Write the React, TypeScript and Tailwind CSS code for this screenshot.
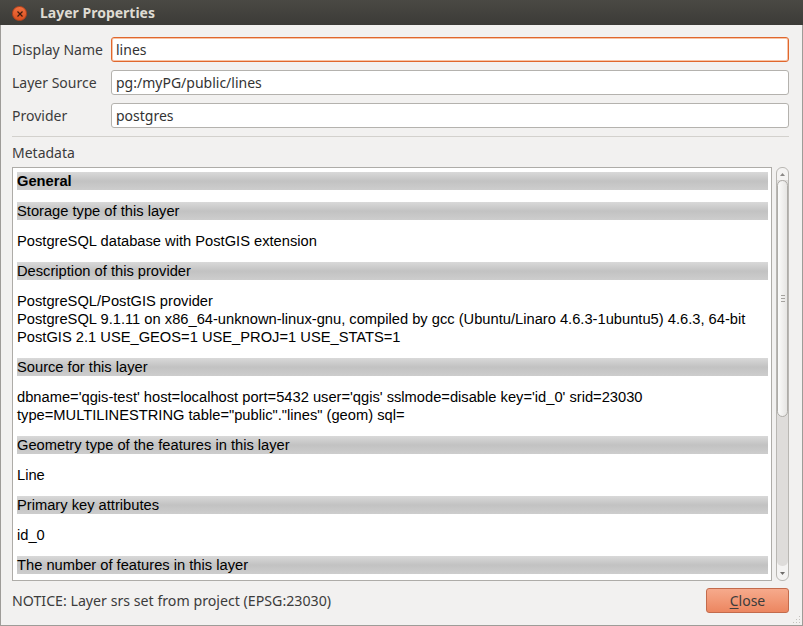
import React from 'react';

const ui = { fontFamily: '"Noto Sans", "Open Sans", sans-serif' };
const doc = { fontFamily: '"Liberation Sans", Arial, sans-serif' };

const Field: React.FC<{ label: string; value: string; focused?: boolean }> = ({ label, value, focused }) => (
  <>
    <div className="text-[14px] text-[#3c3c3c] leading-[25px]">{label}</div>
    <div
      className={
        focused
          ? 'h-[25px] rounded-[3px] border border-[#e0672d] bg-white pl-[4px] text-[14px] leading-[23px] text-[#333] shadow-[inset_0_0_0_1px_#f7c3a6]'
          : 'h-[25px] rounded-[3px] border border-[#b4b2ae] bg-white pl-[4px] text-[14px] leading-[23px] text-[#333]'
      }
    >
      {value}
    </div>
  </>
);

const Header: React.FC<{ children: React.ReactNode; bold?: boolean }> = ({ children, bold }) => (
  <div
    className={
      'h-[18px] leading-[18px] text-[14.7px] text-black bg-gradient-to-b from-[#d9d9d9] via-[#c2c2c2] to-[#cdcdcd] whitespace-nowrap ' +
      (bold ? 'font-bold' : '')
    }
  >
    {children}
  </div>
);

const Text: React.FC<{ children: React.ReactNode }> = ({ children }) => (
  <div className="leading-[18px] text-[14.7px] text-black whitespace-nowrap">{children}</div>
);

const Scrollbar: React.FC = () => (
  <div className="w-[13px] h-full rounded-[6px] border border-[#b9b7b3] bg-[#f4f3f2] flex flex-col overflow-hidden">
    <div className="h-[12px] flex items-center justify-center">
      <svg width="5" height="3" viewBox="0 0 5 3">
        <path d="M0 3 L2.5 0 L5 3 Z" fill="#8a8886" />
      </svg>
    </div>
    <div className="flex-1 flex flex-col bg-[#dedcda] rounded-b-[5px]">
      <div className="h-[237px] rounded-[6px] border border-[#aeaca8] bg-gradient-to-r from-[#fbfbfa] to-[#e6e5e3] flex flex-col items-center justify-center gap-[2px]">
        <div className="w-[4px] h-px bg-[#a4a29e]" />
        <div className="w-[4px] h-px bg-[#a4a29e]" />
        <div className="w-[4px] h-px bg-[#a4a29e]" />
      </div>
    </div>
    <div className="h-[14px] flex items-center justify-center">
      <svg width="5" height="3" viewBox="0 0 5 3">
        <path d="M0 0 L2.5 3 L5 0 Z" fill="#6e6c6a" />
      </svg>
    </div>
  </div>
);

export default function App() {
  return (
    <div className="w-[803px] h-[626px] flex flex-col bg-[#f2f1f0] relative" style={ui}>
      {/* title bar */}
      <div className="h-[25px] bg-gradient-to-b from-[#4a4944] to-[#3c3b37] flex items-center">
        <div className="ml-[12px] mt-[2px] w-[15px] h-[15px] rounded-full bg-gradient-to-b from-[#f0703f] to-[#d9501f] border border-[#b8431c] flex items-center justify-center">
          <svg width="6" height="6" viewBox="0 0 6 6">
            <path d="M0.5 0.5 L5.5 5.5 M5.5 0.5 L0.5 5.5" stroke="#3b1a0d" strokeWidth="1.2" />
          </svg>
        </div>
        <div className="ml-[13px] text-[14px] font-bold text-[#dfdbd2] leading-none">Layer Properties</div>
      </div>

      {/* body */}
      <div className="flex-1 flex flex-col border-l border-r border-b border-[#9e9c98] pl-[11px] pr-[13px] pt-[12px]">
        <div className="grid grid-cols-[99px_1fr] gap-y-[8px]">
          <Field label="Display Name" value="lines" focused />
          <Field label="Layer Source" value="pg:/myPG/public/lines" />
          <Field label="Provider" value="postgres" />
        </div>

        <div className="mt-[8px] h-px bg-[#d3d1cd]" />
        <div className="mt-[7px] text-[14px] leading-[17px] text-[#3c3c3c]">Metadata</div>

        <div className="mt-[6px] h-[414px] flex gap-[4px]">
          <div className="flex-1 h-full border border-[#aeaca8] bg-white overflow-hidden pl-[4px] pr-[3px] pt-[4px]" style={doc}>
            <div className="flex flex-col gap-[12px]">
              <Header bold>General</Header>
              <Header>Storage type of this layer</Header>
              <Text>PostgreSQL database with PostGIS extension</Text>
              <Header>Description of this provider</Header>
              <div>
                <Text>PostgreSQL/PostGIS provider</Text>
                <Text>
                  PostgreSQL 9.1.11 on x86_64-unknown-linux-gnu, compiled by gcc (Ubuntu/Linaro 4.6.3-1ubuntu5) 4.6.3, 64-bit
                </Text>
                <Text>PostGIS 2.1 USE_GEOS=1 USE_PROJ=1 USE_STATS=1</Text>
              </div>
              <Header>Source for this layer</Header>
              <div>
                <Text>
                  dbname='qgis-test' host=localhost port=5432 user='qgis' sslmode=disable key='id_0' srid=23030
                </Text>
                <Text>type=MULTILINESTRING table="public"."lines" (geom) sql=</Text>
              </div>
              <Header>Geometry type of the features in this layer</Header>
              <Text>Line</Text>
              <Header>Primary key attributes</Header>
              <Text>id_0</Text>
              <Header>The number of features in this layer</Header>
            </div>
          </div>
          <Scrollbar />
        </div>

        <div className="mt-[7px] flex items-center justify-between">
          <div className="text-[14.2px] text-[#3c3c3c]">NOTICE: Layer srs set from project (EPSG:23030)</div>
          <button className="w-[83px] h-[25px] rounded-[3px] border border-[#c36b4c] bg-gradient-to-b from-[#f6aa8c] to-[#ec8660] text-[14px] text-[#3c3c3c] leading-none">
            <span className="underline underline-offset-2">C</span>lose
          </button>
        </div>
      </div>

      {/* resize grip */}
      <svg className="absolute right-[2px] bottom-[2px]" width="10" height="10" viewBox="0 0 10 10">
        <rect x="8" y="2" width="1" height="1" fill="#c4c2be" />
        <rect x="5" y="5" width="1" height="1" fill="#c4c2be" />
        <rect x="8" y="5" width="1" height="1" fill="#c4c2be" />
        <rect x="2" y="8" width="1" height="1" fill="#c4c2be" />
        <rect x="5" y="8" width="1" height="1" fill="#c4c2be" />
        <rect x="8" y="8" width="1" height="1" fill="#c4c2be" />
      </svg>
    </div>
  );
}
